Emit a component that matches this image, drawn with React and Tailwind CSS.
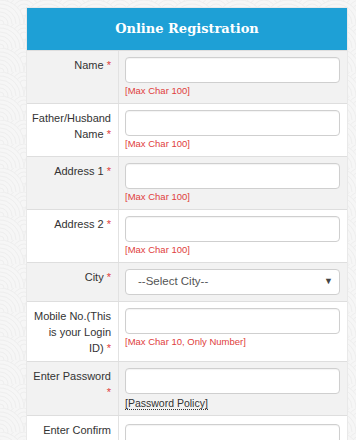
import React from "react";

const Star = () => <span className="text-[#e0403d]"> *</span>;

function Row({ gray, label, children, pb = "pb-[5px]" }) {
  return (
    <div className={`flex border-t border-[#dedede] ${gray ? "bg-[#f2f2f2]" : "bg-white"}`}>
      <div className={`w-[92px] shrink-0 border-r border-[#e2e2e2] pt-[6px] ${pb} pr-[7px] text-right text-[11px] leading-[16px] text-[#333] whitespace-nowrap`}>
        {label}
      </div>
      <div className={`flex-1 pt-[6px] ${pb} pl-[6px] pr-[7px]`}>{children}</div>
    </div>
  );
}

const Input = () => (
  <div className="h-[26px] w-full rounded-[4px] border border-[#cfcfcf] bg-white shadow-[inset_0_1px_1px_rgba(0,0,0,0.05)]" />
);

const Hint = ({ children }) => (
  <div className="text-[9.5px] leading-[15px] text-[#e0403d]">{children}</div>
);

export default function App() {
  return (
    <div
      className="relative min-h-screen overflow-hidden bg-[#f6f6f6]"
      style={{ fontFamily: '"Liberation Sans", Arial, sans-serif' }}
    >
      <svg className="absolute inset-0 h-full w-full" aria-hidden="true">
        <defs>
          <pattern id="sei" width="48" height="24" patternUnits="userSpaceOnUse">
            {[
              [0, 0],
              [48, 0],
              [24, 12],
              [0, 24],
              [48, 24],
            ].map(([cx, cy], i) => (
              <g key={i}>
                {[24, 20, 16, 12, 8, 4].map((r) => (
                  <circle key={r} cx={cx} cy={cy} r={r} fill="#f6f6f6" stroke="#eeeeee" strokeWidth="1" />
                ))}
              </g>
            ))}
          </pattern>
        </defs>
        <rect width="100%" height="100%" fill="url(#sei)" />
      </svg>

      <div className="relative pl-[26px] pt-[7px]">
        <div className="w-[322px] border border-[#e9e9e9] bg-white">
          <div className="flex h-[42px] items-center justify-center bg-[#1ea0d6]">
            <span
              className="text-[13px] font-bold text-white"
              style={{ fontFamily: '"DejaVu Serif", "Liberation Serif", serif' }}
            >
              Online Registration
            </span>
          </div>

          <Row gray label={<>Name<Star /></>}>
            <Input />
            <Hint>[Max Char 100]</Hint>
          </Row>
          <Row label={<>Father/Husband<br />Name<Star /></>}>
            <Input />
            <Hint>[Max Char 100]</Hint>
          </Row>
          <Row gray label={<>Address 1<Star /></>}>
            <Input />
            <Hint>[Max Char 100]</Hint>
          </Row>
          <Row label={<>Address 2<Star /></>}>
            <Input />
            <Hint>[Max Char 100]</Hint>
          </Row>
          <Row gray pb="pb-[6px]" label={<>City<Star /></>}>
            <div className="flex h-[26px] w-full items-center justify-between rounded-[4px] border border-[#cfcfcf] bg-white pl-[12px] pr-[6px]">
              <span className="text-[11.5px] text-[#555]">--Select City--</span>
              <span className="text-[9px] text-[#444]">▼</span>
            </div>
          </Row>
          <Row label={<>Mobile No.(This<br />is your Login<br />ID)<Star /></>}>
            <Input />
            <Hint>[Max Char 10, Only Number]</Hint>
          </Row>
          <Row gray label={<>Enter Password<br /><Star /></>}>
            <Input />
            <div className="mt-[2px] text-[10.5px] leading-[14px] text-[#333]">
              <span className="border-b border-dotted border-[#333]">[Password Policy]</span>
            </div>
          </Row>
          <Row label={<>Enter Confirm<br />Password<Star /></>}>
            <div className="pt-[2px]">
              <Input />
            </div>
          </Row>
          <Row gray label={<>Email<Star /></>}>
            <Input />
            <Hint>[Max Char 100]</Hint>
          </Row>
        </div>
      </div>
    </div>
  );
}
